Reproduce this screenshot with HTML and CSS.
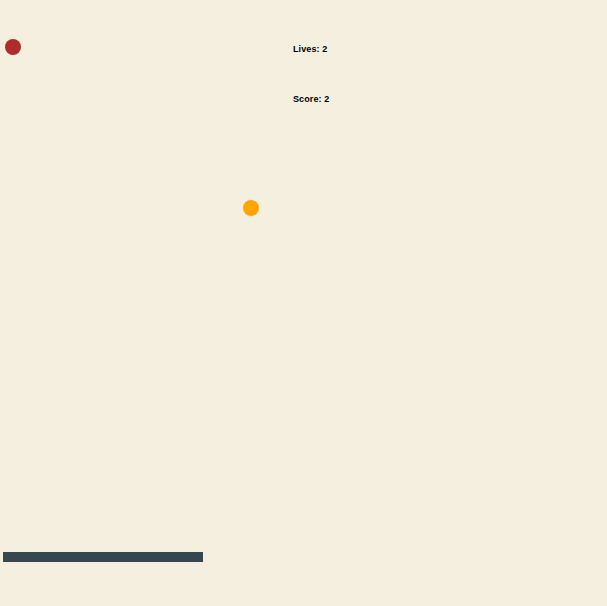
FILE: index.html
```html
<!DOCTYPE html>
<html>
<head>
<meta charset="utf-8">
<link rel="stylesheet" href="styles.css">
</head>
<body>
<div class="game">
  <div class="hud">
    <div class="stat">Lives: 2</div>
    <div class="stat">Score: 2</div>
  </div>
  <div class="ball ball-red"></div>
  <div class="ball ball-orange"></div>
  <div class="paddle"></div>
</div>
</body>
</html>
```
FILE: styles.css
```css
html, body {
  margin: 0;
  padding: 0;
  background: #f5efdf;
}
.game {
  position: relative;
  width: 607px;
  height: 606px;
  background: #f5efdf;
  font-family: "Liberation Sans", Arial, sans-serif;
}
.hud {
  position: absolute;
  left: 293px;
  top: 43px;
  display: flex;
  flex-direction: column;
  gap: 38px;
}
.stat {
  font-size: 9px;
  font-weight: bold;
  letter-spacing: 0.1px;
  line-height: 12px;
  color: #000;
}
.ball {
  position: absolute;
  width: 16px;
  height: 16px;
  border-radius: 50%;
}
.ball-red {
  left: 5px;
  top: 39px;
  background: #b02c2c;
}
.ball-orange {
  left: 243px;
  top: 200px;
  background: #ffa500;
}
.paddle {
  position: absolute;
  left: 3px;
  top: 552px;
  width: 200px;
  height: 10px;
  background: #37474f;
}
```
